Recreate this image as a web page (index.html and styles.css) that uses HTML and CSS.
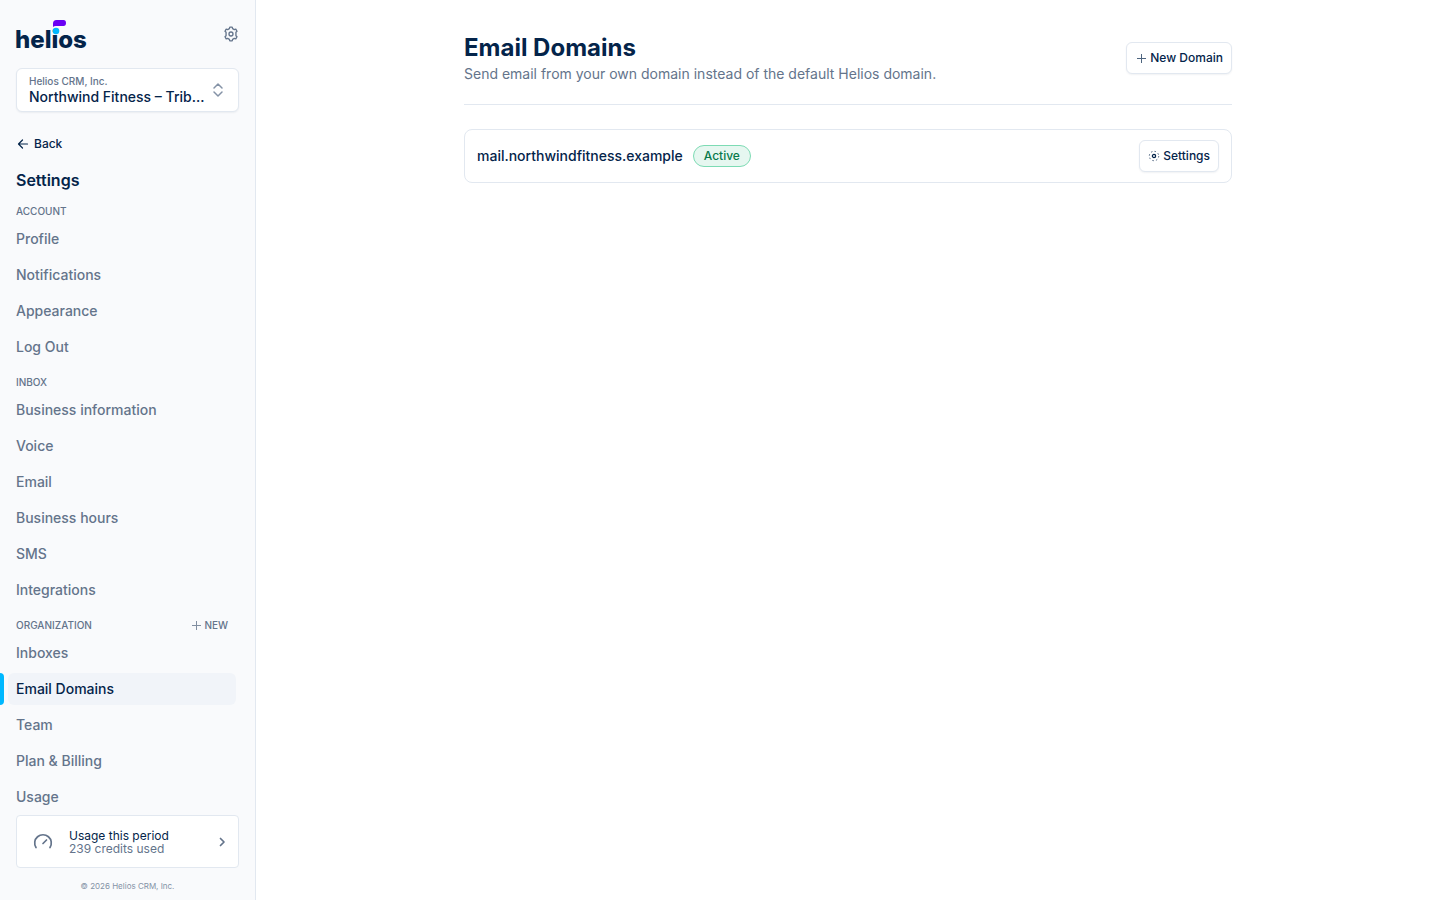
FILE: index.html
```html
<!DOCTYPE html>
<html lang="en">
<head>
  <meta charset="UTF-8">
  <title>Email Domains – Helios</title>
  <meta name="viewport" content="width=device-width, initial-scale=1.0">
  <link rel="stylesheet" href="styles.css">
</head>
<body>

<aside class="sidebar">
  <div class="sidebar-top">
    <a class="logo" href="#" aria-label="helios">
      <svg width="74" height="30" viewBox="0 0 74 30">
        <text class="logo-text" x="-1" y="29">helios</text>
        <circle cx="40" cy="12" r="3.300" fill="#00b8ff"/>
        <path d="M37 8V4.500Q37 1 40.500 1H47.500Q50 1 50 4T47.500 7H40Q38 7 37 8Z" fill="#6a00f4"/>
      </svg>
    </a>
    <button class="icon-btn" aria-label="Settings">
      <svg width="16" height="16" viewBox="0 0 24 24" fill="none" stroke="currentColor" stroke-width="2" stroke-linejoin="round">
        <path d="M9.600 3.900 10.200 1.700H13.800L14.400 3.900 17 5.400 19.200 4.800 21 7.900 19.400 9.500V14.500L21 16.100 19.200 19.200 17 18.600 14.400 20.100 13.800 22.300H10.200L9.600 20.100 7 18.600 4.800 19.200 3 16.100 4.600 14.500V9.500L3 7.900 4.800 4.800 7 5.400Z"/>
        <circle cx="12" cy="12" r="3"/>
      </svg>
    </button>
  </div>

  <button class="account-switcher">
    <span class="account-names">
      <span class="account-org">Helios CRM, Inc.</span>
      <span class="account-name">Northwind Fitness – Trib...</span>
    </span>
    <svg width="16" height="16" viewBox="0 0 16 16" fill="none" stroke="currentColor" stroke-width="1.500" stroke-linecap="round" stroke-linejoin="round">
      <path d="M4 6 8 2l4 4M4 10l4 4 4-4"/>
    </svg>
  </button>

  <a class="back" href="#">
    <svg width="14" height="14" viewBox="0 0 14 14" fill="none" stroke="currentColor" stroke-width="1.200" stroke-linecap="round" stroke-linejoin="round">
      <path d="M11.500 7H2.500M6.500 3l-4 4 4 4"/>
    </svg>
    Back
  </a>

  <h2 class="sidebar-title">Settings</h2>

  <nav class="nav">
    <h3 class="nav-heading">ACCOUNT</h3>
    <a class="nav-item" href="#">Profile</a>
    <a class="nav-item" href="#">Notifications</a>
    <a class="nav-item" href="#">Appearance</a>
    <a class="nav-item" href="#">Log Out</a>

    <h3 class="nav-heading">INBOX</h3>
    <a class="nav-item" href="#">Business information</a>
    <a class="nav-item" href="#">Voice</a>
    <a class="nav-item" href="#">Email</a>
    <a class="nav-item" href="#">Business hours</a>
    <a class="nav-item" href="#">SMS</a>
    <a class="nav-item" href="#">Integrations</a>

    <div class="nav-heading-row">
      <h3 class="nav-heading">ORGANIZATION</h3>
      <button class="nav-new">
        <svg width="10" height="10" viewBox="0 0 10 10" stroke="currentColor" opacity="0.8"><path d="M5.500 1v9M1 5.500h9"/></svg>
        NEW
      </button>
    </div>
    <a class="nav-item" href="#">Inboxes</a>
    <a class="nav-item active" href="#" aria-current="page">Email Domains</a>
    <a class="nav-item" href="#">Team</a>
    <a class="nav-item" href="#">Plan &amp; Billing</a>
    <a class="nav-item" href="#">Usage</a>
  </nav>

  <div class="sidebar-bottom">
    <a class="usage" href="#">
      <svg class="usage-gauge" width="20" height="20" viewBox="0 0 20 20" fill="none" stroke="currentColor" stroke-width="1.700" stroke-linecap="round">
        <path d="M3 15.500A8.300 8.300 0 1 1 17 15.500M10 11.500l3.500-3.500"/>
      </svg>
      <span class="usage-text">
        <span class="usage-label">Usage this period</span>
        <span>239 credits used</span>
      </span>
      <svg width="12" height="12" viewBox="0 0 12 12" fill="none" stroke="currentColor" stroke-width="1.700" stroke-linecap="round" stroke-linejoin="round">
        <path d="m4.500 2.500 3.500 3.500-3.500 3.500"/>
      </svg>
    </a>
    <p class="copyright">© 2026 Helios CRM, Inc.</p>
  </div>
</aside>

<main class="main">
  <div class="page">
    <header class="page-header">
      <div>
        <h1 class="page-title">Email Domains</h1>
        <p class="page-subtitle">Send email from your own domain instead of the default Helios domain.</p>
      </div>
      <button class="btn">
        <svg width="12" height="12" viewBox="0 0 12 12" stroke="currentColor" opacity="0.7"><path d="M6.500 2v9M2 6.500h9"/></svg>
        New Domain
      </button>
    </header>

    <div class="domain-card">
      <span class="domain-name">mail.northwindfitness.example</span>
      <span class="badge">Active</span>
      <button class="btn">
        <svg width="12" height="12" viewBox="0 0 12 12" fill="none" stroke="currentColor">
          <circle cx="6" cy="6" r="1.600" stroke-width="1.300"/>
          <circle cx="6" cy="6" r="4.700" stroke-width="1" stroke-dasharray="1.500 2.190" opacity="0.7"/>
        </svg>
        Settings
      </button>
    </div>
  </div>
</main>

</body>
</html>
```

FILE: styles.css
```css
* {
  box-sizing: border-box;
}

body {
  display: flex;
  height: 100vh;
  margin: 0;
  font-family: Inter, "Liberation Sans", sans-serif;
  font-size: 14px;
  color: #04244a;
  background-color: #fff;
}

h1,
h2,
h3,
p {
  margin: 0;
}

a {
  color: inherit;
  text-decoration: none;
}

button {
  padding: 0;
  font: inherit;
  color: inherit;
  background: none;
  border: none;
  cursor: pointer;
}

svg {
  flex-shrink: 0;
}

/* sidebar */

.sidebar {
  display: flex;
  flex-direction: column;
  flex-shrink: 0;
  width: 256px;
  height: 100%;
  padding-top: 19px;
  background-color: #f9fafc;
  border-right: 1px solid #e2e8f0;
}

.sidebar-top {
  display: flex;
  align-items: center;
  justify-content: space-between;
  margin: 0 16px 19px;
}

.logo svg {
  display: block;
  overflow: visible;
}

.logo-text {
  font-size: 24px;
  font-weight: 800;
  fill: #04244a;
}

.icon-btn {
  display: flex;
  color: #64748b;
}

.account-switcher {
  display: flex;
  align-items: center;
  gap: 4px;
  height: 44px;
  margin: 0 16px;
  padding: 0 12px;
  text-align: left;
  color: #8492a6;
  background-color: #fff;
  border: 1px solid #e2e8f0;
  border-radius: 6px;
  box-shadow: 0 1px 2px rgba(15, 35, 70, 0.06);
}

.account-names {
  flex: 1;
  min-width: 0;
  padding-top: 2px;
}

.account-org,
.account-name {
  display: block;
}

.account-org {
  font-size: 10px;
  line-height: 12px;
  font-weight: 500;
  color: #64748b;
}

.account-name {
  overflow: hidden;
  line-height: 20px;
  font-weight: 500;
  color: #04244a;
  text-overflow: ellipsis;
  white-space: nowrap;
}

.back {
  display: flex;
  align-items: center;
  gap: 4px;
  margin: 24px 16px 0;
  font-size: 12px;
  line-height: 16px;
  font-weight: 500;
}

.sidebar-title {
  margin: 16px 16px 0;
  font-size: 16px;
  line-height: 24px;
  font-weight: 600;
}

.nav {
  display: flex;
  flex: 1;
  flex-direction: column;
  min-height: 0;
  padding: 4px 19px 0 0;
  overflow: hidden;
}

.nav-heading {
  margin: 8px 0 5px 16px;
  font-size: 10px;
  line-height: 14px;
  font-weight: 500;
  color: #64748b;
}

.nav-heading-row {
  display: flex;
  align-items: center;
  justify-content: space-between;
}

.nav-new {
  display: flex;
  align-items: center;
  gap: 3px;
  margin: 8px 8px 5px 0;
  font-size: 10px;
  line-height: 14px;
  font-weight: 500;
  color: #64748b;
}

.nav-item {
  flex-shrink: 0;
  margin: 0 0 4px 8px;
  padding: 0 8px;
  line-height: 32px;
  font-weight: 500;
  color: #64748b;
  border-radius: 6px;
}

.nav-item.active {
  position: relative;
  color: #04244a;
  background-color: #f1f4f9;
}

.nav-item.active::before {
  content: "";
  position: absolute;
  top: 0;
  left: -8px;
  width: 4px;
  height: 100%;
  background-color: #00b8ff;
  border-radius: 0 4px 4px 0;
}

.sidebar-bottom {
  padding: 0 16px 8px;
}

.usage {
  display: flex;
  align-items: center;
  height: 53px;
  padding: 0 10px 0 16px;
  font-size: 12px;
  line-height: 13px;
  color: #64748b;
  background-color: #fff;
  border: 1px solid #e2e8f0;
  border-radius: 4px;
}

.usage-gauge {
  margin-right: 16px;
}

.usage-text {
  flex: 1;
  display: flex;
  flex-direction: column;
}

.usage-label {
  color: #04244a;
}

.copyright {
  margin-top: 12px;
  font-size: 8px;
  line-height: 12px;
  text-align: center;
  color: #8492a6;
}

/* page */

.main {
  flex: 1;
  min-width: 0;
  padding: 32px 24px;
}

.page {
  max-width: 768px;
  margin: 0 auto;
}

.page-header {
  display: flex;
  align-items: center;
  justify-content: space-between;
  padding-bottom: 20px;
  margin-bottom: 24px;
  border-bottom: 1px solid #e2e8f0;
}

.page-title {
  font-size: 24px;
  line-height: 32px;
  font-weight: 700;
}

.page-subtitle {
  line-height: 20px;
  color: #64748b;
}

.btn {
  display: flex;
  align-items: center;
  gap: 3px;
  height: 32px;
  padding: 0 8px;
  font-size: 12px;
  line-height: 16px;
  font-weight: 500;
  background-color: #fff;
  border: 1px solid #e2e8f0;
  border-radius: 6px;
  box-shadow: 0 1px 2px rgba(15, 35, 70, 0.06);
}

.domain-card {
  display: flex;
  align-items: center;
  gap: 10px;
  padding: 10px 12px;
  border: 1px solid #e2e8f0;
  border-radius: 8px;
}

.domain-card .btn {
  margin-left: auto;
}

.domain-name {
  line-height: 20px;
  font-weight: 500;
}

.badge {
  padding: 0 10px;
  font-size: 12px;
  line-height: 20px;
  font-weight: 500;
  color: #087a4b;
  background-color: #e6f7f0;
  border: 1px solid #7ddbb4;
  border-radius: 11px;
}
```
